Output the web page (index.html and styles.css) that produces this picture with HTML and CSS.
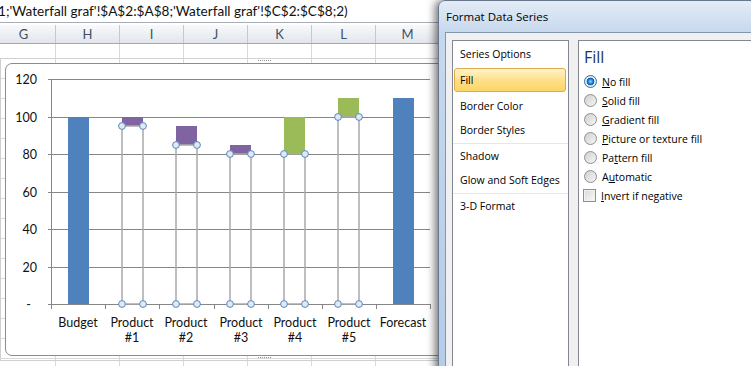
FILE: index.html
```html
<!DOCTYPE html>
<html lang="en">
<head>
    <meta charset="UTF-8">
    <title>Waterfall graf - Format Data Series</title>
    <link rel="stylesheet" href="styles.css">
</head>
<body>
<div class="screen">
    <div class="sheet">
        <div class="formula-bar">1;'Waterfall graf'!$A$2:$A$8;'Waterfall graf'!$C$2:$C$8;2)</div>
        <div class="col-heads">
            <div class="col">G</div>
            <div class="col">H</div>
            <div class="col">I</div>
            <div class="col">J</div>
            <div class="col">K</div>
            <div class="col">L</div>
            <div class="col">M</div>
        </div>
        <div class="cells"></div>

        <div class="chart-frame">
            <span class="grip grip-top"></span>
            <span class="grip grip-bottom"></span>
            <div class="chart">
                <svg width="470" height="291" viewBox="0 0 470 291">
                    <!-- gridlines + axes -->
                    <path class="grid" d="M42 15.5H424M42 53.5H424M42 90.5H424M42 128.5H424M42 165.5H424M42 203.5H424M42 240.5H424"/>
                    <path class="grid" d="M45.5 15V241M45.5 240V245M99.5 240V245M153.5 240V245M208.5 240V245M262.5 240V245M316.5 240V245M370.5 240V245M424.5 240V245"/>

                    <g class="y-labels">
                        <text x="31" y="20">120</text>
                        <text x="31" y="58">100</text>
                        <text x="31" y="95">80</text>
                        <text x="31" y="133">60</text>
                        <text x="31" y="170">40</text>
                        <text x="31" y="208">20</text>
                        <text x="25" y="245">-</text>
                    </g>

                    <!-- totals -->
                    <rect class="total" x="62" y="53" width="21" height="187"/>
                    <rect class="total" x="387" y="34" width="21" height="206"/>

                    <!-- steps -->
                    <rect class="down" x="116" y="53" width="21" height="9"/>
                    <rect class="down" x="170" y="62" width="21" height="19"/>
                    <rect class="down" x="224" y="81" width="21" height="9"/>
                    <rect class="up" x="278" y="53" width="21" height="37"/>
                    <rect class="up" x="332" y="34" width="21" height="19"/>

                    <!-- selected "no fill" base series -->
                    <rect class="base" x="116" y="62" width="21" height="178"/>
                    <rect class="base" x="170" y="81" width="21" height="159"/>
                    <rect class="base" x="224" y="90" width="21" height="150"/>
                    <rect class="base" x="278" y="90" width="21" height="150"/>
                    <rect class="base" x="332" y="53" width="21" height="187"/>

                    <g class="handles">
                        <circle cx="116" cy="62" r="3.4"/><circle cx="137" cy="62" r="3.4"/>
                        <circle cx="116" cy="240" r="3.4"/><circle cx="137" cy="240" r="3.4"/>
                        <circle cx="170" cy="81" r="3.4"/><circle cx="191" cy="81" r="3.4"/>
                        <circle cx="170" cy="240" r="3.4"/><circle cx="191" cy="240" r="3.4"/>
                        <circle cx="224" cy="90" r="3.4"/><circle cx="245" cy="90" r="3.4"/>
                        <circle cx="224" cy="240" r="3.4"/><circle cx="245" cy="240" r="3.4"/>
                        <circle cx="278" cy="90" r="3.4"/><circle cx="299" cy="90" r="3.4"/>
                        <circle cx="278" cy="240" r="3.4"/><circle cx="299" cy="240" r="3.4"/>
                        <circle cx="332" cy="53" r="3.4"/><circle cx="353" cy="53" r="3.4"/>
                        <circle cx="332" cy="240" r="3.4"/><circle cx="353" cy="240" r="3.4"/>
                    </g>

                    <g class="x-labels">
                        <text x="72" y="263">Budget</text>
                        <text x="126" y="263">Product</text><text x="126" y="278">#1</text>
                        <text x="180" y="263">Product</text><text x="180" y="278">#2</text>
                        <text x="235" y="263">Product</text><text x="235" y="278">#3</text>
                        <text x="289" y="263">Product</text><text x="289" y="278">#4</text>
                        <text x="343" y="263">Product</text><text x="343" y="278">#5</text>
                        <text x="397" y="263">Forecast</text>
                    </g>
                </svg>
            </div>
        </div>
    </div>

    <div class="dialog">
        <div class="dialog-title">Format Data Series</div>
        <div class="dialog-body">
            <div class="nav">
                <ul class="nav-group">
                    <li>Series Options</li>
                    <li class="sel">Fill</li>
                    <li>Border Color</li>
                    <li>Border Styles</li>
                </ul>
                <ul class="nav-group">
                    <li>Shadow</li>
                    <li>Glow and Soft Edges</li>
                </ul>
                <ul class="nav-group">
                    <li>3-D Format</li>
                </ul>
            </div>
            <div class="pane">
                <h2>Fill</h2>
                <label class="opt"><span class="radio on"></span><span><u>N</u>o fill</span></label>
                <label class="opt"><span class="radio"></span><span><u>S</u>olid fill</span></label>
                <label class="opt"><span class="radio"></span><span><u>G</u>radient fill</span></label>
                <label class="opt"><span class="radio"></span><span><u>P</u>icture or texture fill</span></label>
                <label class="opt"><span class="radio"></span><span>Pa<u>t</u>tern fill</span></label>
                <label class="opt"><span class="radio"></span><span>A<u>u</u>tomatic</span></label>
                <label class="opt"><span class="check"></span><span><u>I</u>nvert if negative</span></label>
            </div>
        </div>
    </div>
</div>
</body>
</html>
```

FILE: styles.css
```css
body {
    margin: 0;
    background: #fff;
}
.screen {
    position: relative;
    width: 751px;
    height: 366px;
    overflow: hidden;
}
.sheet {
    height: 100%;
    font-family: Lato, sans-serif;
}
.formula-bar {
    height: 22px;
    line-height: 22px;
    border-bottom: 1px solid #a7aeb8;
    margin-bottom: 2px;
    font-size: 13.6px;
    color: #111;
    text-indent: -2px;
    white-space: nowrap;
}
.col-heads {
    display: flex;
    margin-left: -8px;
    height: 18px;
    border-bottom: 1px solid #9fa8b3;
    background: linear-gradient(#f8f9fb, #e2e6eb);
}
.col {
    flex: 0 0 64px;
    box-sizing: border-box;
    border-right: 1px solid #c3c9d1;
    text-align: center;
    line-height: 18px;
    font-size: 13px;
    color: #3f5068;
}
.cells {
    height: 322px;
    background-image:
        linear-gradient(to right, #d9d9d9 1px, transparent 1px),
        linear-gradient(to bottom, #d9d9d9 1px, transparent 1px);
    background-size: 64px 100%, 100% 20px;
    background-position: -9px 0, 0 14px;
}

/* chart object sits over the cells */
.chart-frame {
    position: absolute;
    left: 0;
    top: 58px;
    width: 480px;
    height: 303px;
    box-sizing: border-box;
    border: 1px solid #d0d0d0;
    padding: 4px;
}
.grip {
    position: absolute;
    left: 257px;
    width: 13px;
    border-top: 1px dotted #8f8f8f;
}
.grip-top { top: 1px; }
.grip-bottom { top: 298px; }
.chart {
    height: 100%;
    box-sizing: border-box;
    border: 1px solid #8c8c8c;
    border-radius: 7px;
    background: #fff;
}
.chart svg {
    display: block;
}
.chart .grid {
    fill: none;
    stroke: #868686;
    stroke-width: 1;
}
.chart text {
    font-family: Lato, sans-serif;
    font-size: 12.5px;
    fill: #111;
}
.y-labels text { text-anchor: end; }
.x-labels text { text-anchor: middle; }
.total { fill: #4f81bd; }
.down { fill: #8064a2; }
.up { fill: #9bbb59; }
.base {
    fill: none;
    stroke: #a9a9a9;
    stroke-width: 1.5;
}
.handles circle {
    fill: #dfeaf5;
    stroke: #5a87bd;
    stroke-width: 1;
}

/* dialog window */
.dialog {
    position: absolute;
    left: 438px;
    top: 0;
    width: 330px;
    height: 380px;
    box-sizing: border-box;
    padding-left: 6px;
    border: 1px solid #67768b;
    border-radius: 7px 0 0 0;
    background: linear-gradient(#e3ecf7, #c6d8ed 32px, #b4cce9);
    box-shadow: -3px 0 9px rgba(0,0,0,0.55);
    font-family: "Open Sans", sans-serif;
    font-size: 10.5px;
    color: #000;
}
.dialog-title {
    height: 31px;
    line-height: 32px;
    padding-left: 1px;
    font-size: 11.5px;
}
.dialog-body {
    display: flex;
    gap: 9px;
    height: 345px;
    padding: 7px 6px;
    border: 1px solid #8495ad;
    background: #f0f0f0;
}
.nav {
    flex: 0 0 117px;
    box-sizing: border-box;
    border: 1px solid #828790;
    background: #fff;
    padding-top: 1px;
}
.nav-group {
    list-style: none;
    margin: 0;
    padding: 0;
}
.nav-group + .nav-group {
    border-top: 1px solid #e6e6e6;
    margin-top: 1px;
}
.nav-group li {
    height: 24px;
    line-height: 24px;
    padding-left: 7px;
    white-space: nowrap;
}
.nav-group li.sel {
    height: 22px;
    line-height: 22px;
    margin: 2px 2px 2px 1px;
    padding-left: 5px;
    border: 1px solid #dcab4f;
    border-radius: 3px;
    background: linear-gradient(#fff4c8, #ffe08a 50%, #fdd466);
}
.pane {
    flex: 1;
    border: 1px solid #828790;
    background: #fff;
    padding: 0 5px;
}
.pane h2 {
    margin: 5px 0 4px;
    font-size: 16px;
    font-weight: normal;
    line-height: 22px;
    color: #1c3557;
}
.opt {
    display: flex;
    align-items: center;
    gap: 5px;
    height: 19px;
    white-space: nowrap;
}
.radio, .check {
    flex: 0 0 13px;
    height: 13px;
    box-sizing: border-box;
    border: 1px solid #8e8e8e;
}
.radio {
    border-radius: 50%;
    background: linear-gradient(135deg, #cfcfcf, #f6f6f6);
}
.radio.on {
    border-color: #2f6fa6;
    background: radial-gradient(circle, #9fd3ff 0, #2c8ee0 2px, #0c55a3 3.5px, #e7eef6 4.2px, #d5e0ec 100%);
}
.check {
    margin-left: -1px;
    background: linear-gradient(135deg, #d6d6d6, #fbfbfb);
    box-shadow: inset 0 0 0 1px #f2f2f2;
}
```
